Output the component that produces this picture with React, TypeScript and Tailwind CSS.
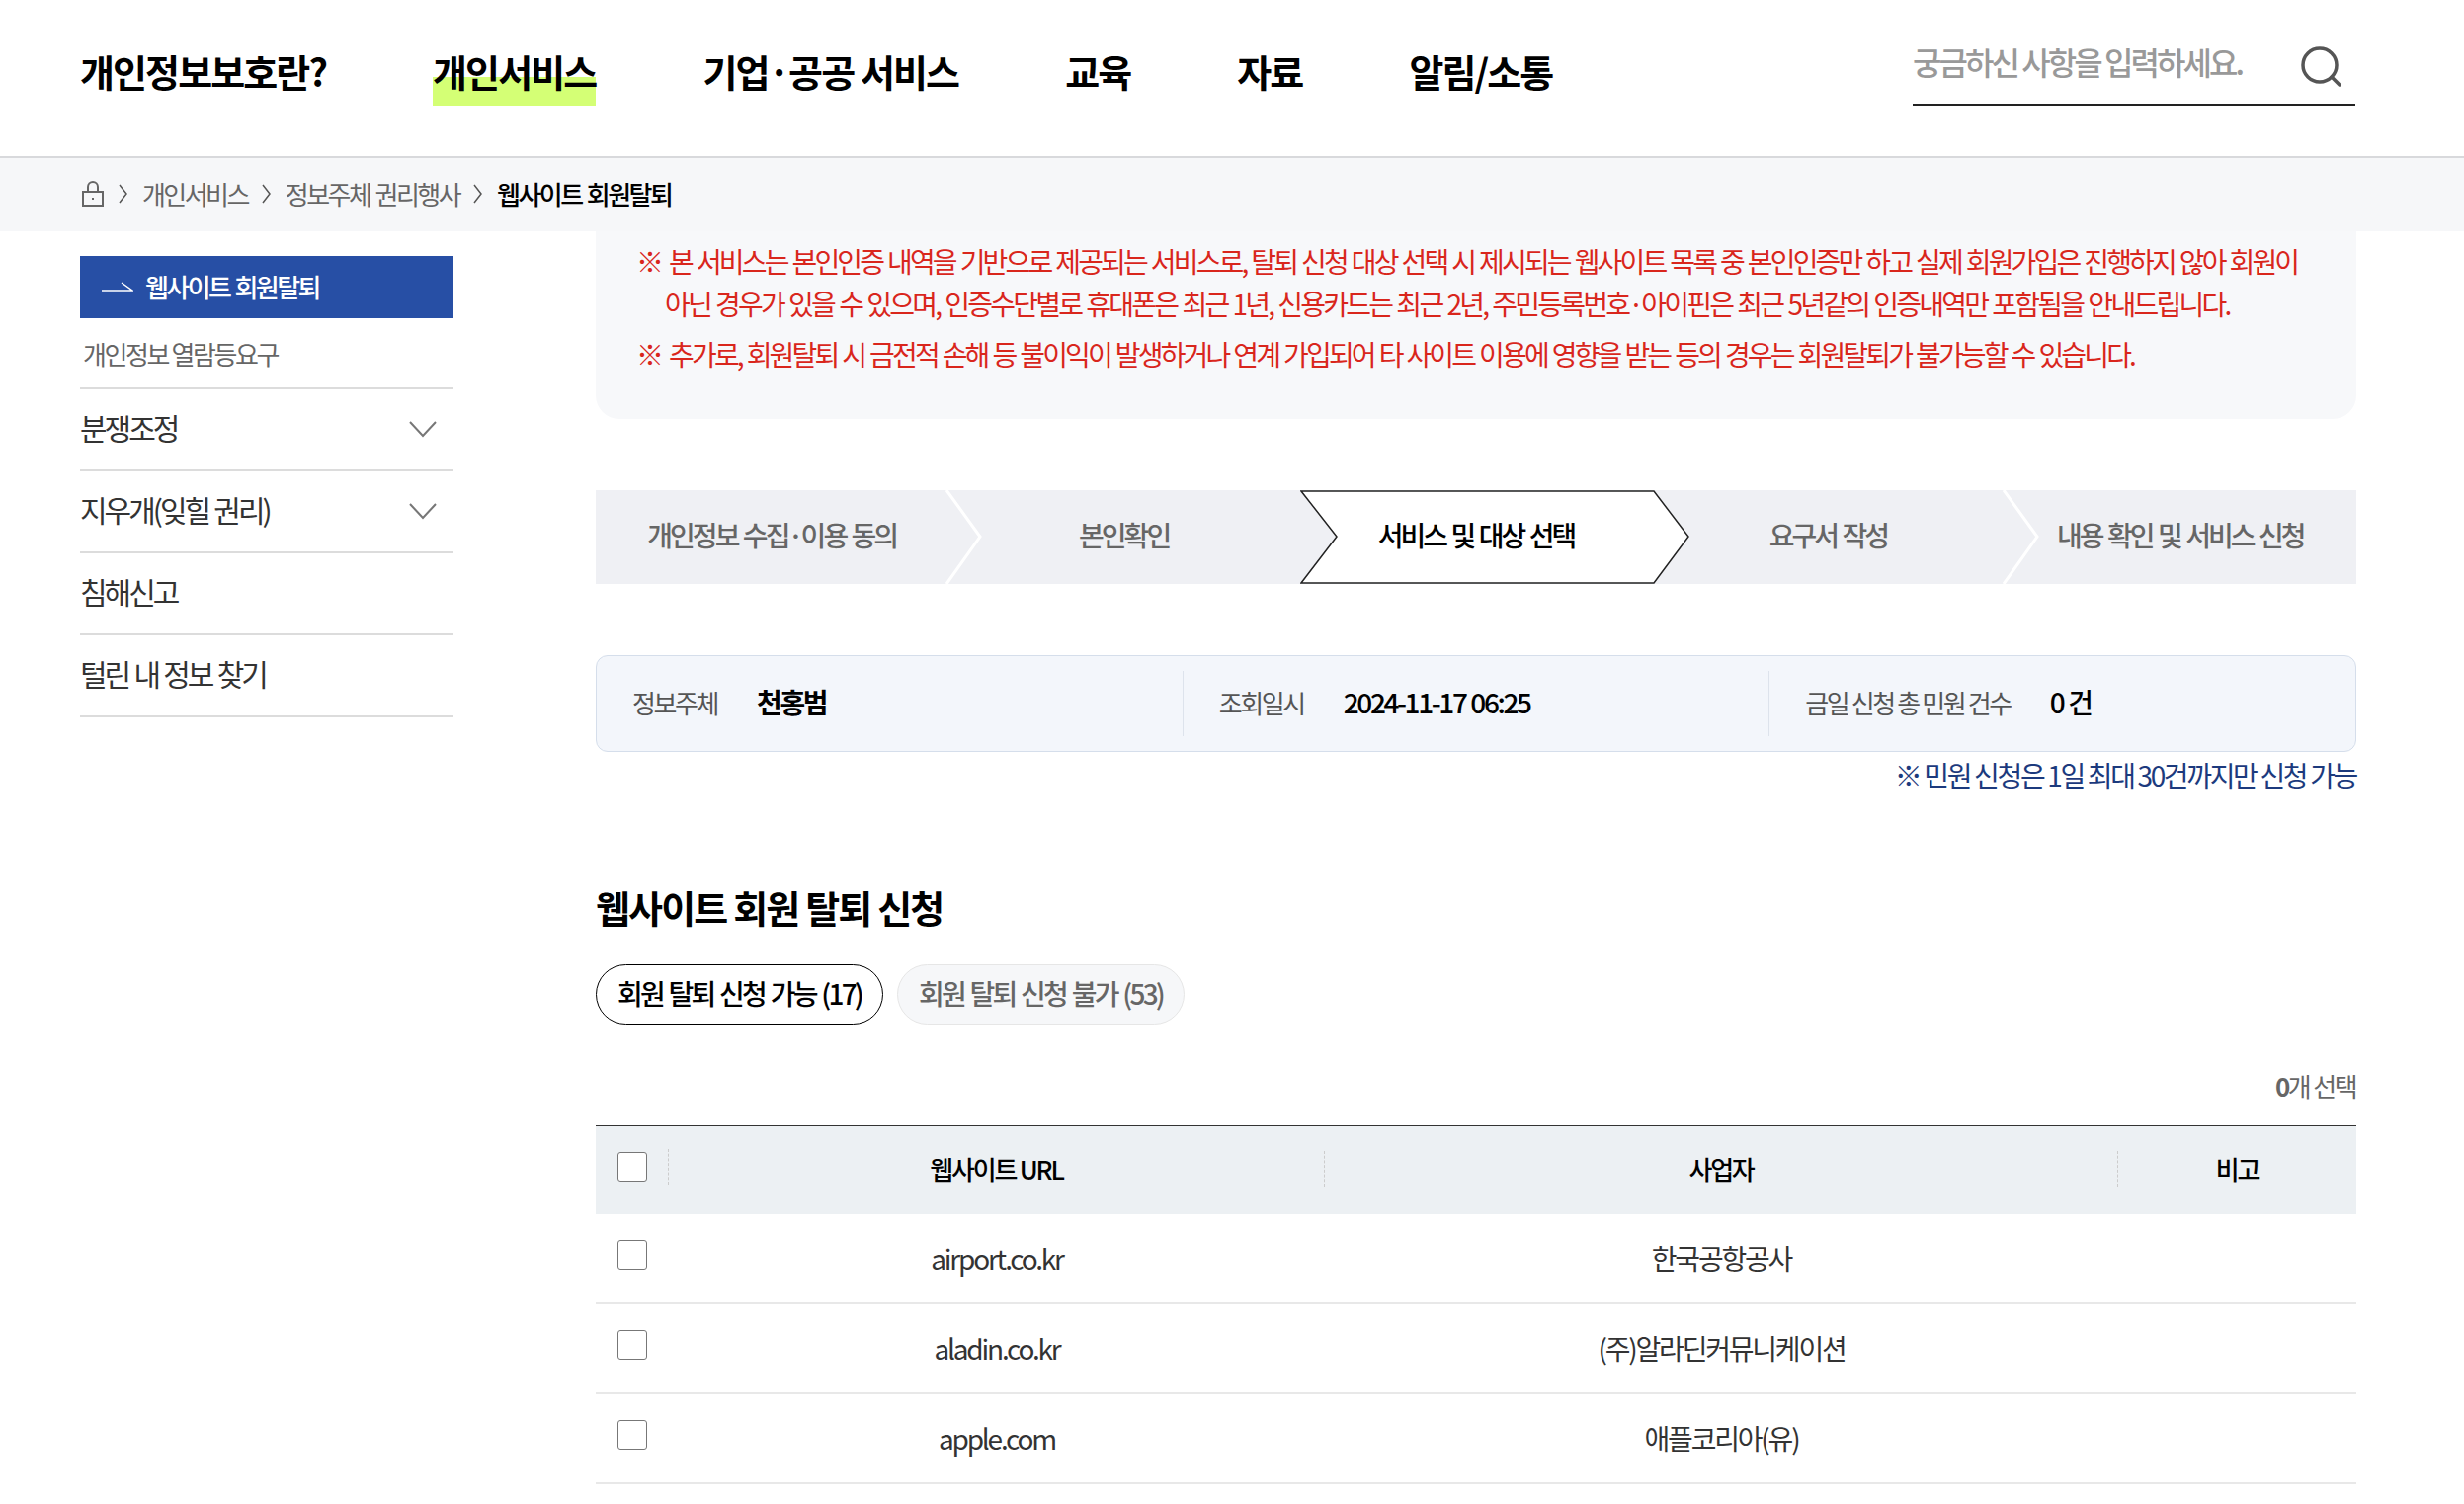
const FONT = "font-['Noto_Sans_CJK_KR','Noto_Sans',sans-serif]";

function Chevron() {
  return (
    <svg width="12" height="22" viewBox="0 0 12 22" fill="none" stroke="#555" strokeWidth="1.5">
      <path d="M2 2l7 9-7 9" />
    </svg>
  );
}

function Down() {
  return (
    <svg className="translate-y-[2px]" width="30" height="18" viewBox="0 0 30 18" fill="none" stroke="#777" strokeWidth="2">
      <path d="M2 2l13 14L28 2" />
    </svg>
  );
}

function Check() {
  return <div className="w-[30px] h-[30px] bg-white border border-[#777] rounded-[3px]" />;
}

const STEPS = ["개인정보 수집·이용 동의", "본인확인", "서비스 및 대상 선택", "요구서 작성", "내용 확인 및 서비스 신청"];

function Steps() {
  return (
    <div className="mt-[72px] flex h-[95px] bg-[#eff0f4]">
      {STEPS.map((s, i) => (
        <div key={s} className={`relative flex-1 flex items-center justify-center pb-[5px] text-[28px] tracking-[-2.95px] [word-spacing:2px] font-medium ${i === 2 ? "text-black" : "text-[#666]"}`}>
          {i === 2 ? (
            <svg className="absolute left-0 top-0 z-10" width="394" height="95" viewBox="0 0 394 95" fill="#fff" stroke="#222" strokeWidth="1.5">
              <path d="M1 1H358L393 47L358 94H1L37 47Z" />
            </svg>
          ) : i !== 4 && i !== 1 ? (
            <svg className="absolute right-[-36px] top-0 z-0" width="38" height="95" viewBox="0 0 38 95" fill="none" stroke="#fff" strokeWidth="3">
              <path d="M1 0L35 47L1 95" />
            </svg>
          ) : null}
          <span className="relative z-20">{s}</span>
        </div>
      ))}
    </div>
  );
}

function Info({ label, value, border, bold }: { label: string; value: string; border?: boolean; bold?: boolean }) {
  return (
    <div className={`flex-1 flex items-center h-[66px] pl-[36px] gap-[40px] ${border ? "border-l border-[#dde3ec]" : ""}`}>
      <span className="text-[26px] tracking-[-2.4px] text-[#555] -translate-y-[2px]">{label}</span>
      <span className={`text-[28px] tracking-[-2.4px] [word-spacing:1px] text-black -translate-y-[2px] ${bold ? "font-bold" : "font-medium"}`}>{value}</span>
    </div>
  );
}

const ROWS = [
  ["airport.co.kr", "한국공항공사"],
  ["aladin.co.kr", "(주)알라딘커뮤니케이션"],
  ["apple.com", "애플코리아(유)"],
];

export default function App() {
  return (
    <div className={`${FONT} h-[1522px] overflow-hidden bg-white text-[#333]`}>
      <header className="h-[160px] border-b-2 border-[#d8d9dc] flex items-start pl-[81px] pr-[110px] justify-between">
        <nav className="flex gap-[108px] pt-[45px] text-[38px] tracking-[-1.9px] font-bold text-black leading-[54px]">
          <span>개인정보보호란?</span>
          <span className="relative">
            <span className="absolute left-0 right-0 top-[33px] h-[29px] bg-[#d4ff75]" />
            <span className="relative">개인서비스</span>
          </span>
          <span>기업·공공 서비스</span>
          <span>교육</span>
          <span>자료</span>
          <span>알림/소통</span>
        </nav>
        <div className="w-[448px] h-[107px] border-b-2 border-[#222] flex items-center justify-between pt-[18px]">
          <span className="text-[32px] tracking-[-2.95px] text-[#999] font-medium">궁금하신 사항을 입력하세요.</span>
          <svg className="mr-[12px] translate-y-[7px]" width="44" height="46" viewBox="0 0 44 46" fill="none" stroke="#555" strokeWidth="3.5" strokeLinecap="round">
            <circle cx="20" cy="20" r="17" />
            <path d="M32 32l8 8" />
          </svg>
        </div>
      </header>

      <div className="h-[74px] bg-[#f6f7f9] pl-[81px] pb-[3px] flex items-center gap-[13px] text-[26px] tracking-[-2.55px] [word-spacing:2px] text-[#666]">
        <svg className="mr-[1px]" width="24" height="28" viewBox="0 0 24 28" fill="none" stroke="#666" strokeWidth="2">
          <rect x="3" y="12" width="20" height="14" />
          <path d="M8 12V7a5 5 0 0110 0v5" />
          <path d="M13 18v2" />
        </svg>
        <Chevron />
        <span>개인서비스</span>
        <Chevron />
        <span>정보주체 권리행사</span>
        <Chevron />
        <span className="text-black font-medium">웹사이트 회원탈퇴</span>
      </div>

      <div className="flex pl-[81px] pr-[109px] gap-[144px]">
        <aside className="w-[378px] shrink-0 pt-[25px]">
          <div className="h-[63px] bg-[#274fa5] text-white flex items-center pl-[22px] pb-[2px] gap-[12px] text-[26px] tracking-[-2.6px] [word-spacing:2px] font-medium">
            <svg width="32" height="12" viewBox="0 0 32 12" fill="none" stroke="#fff" strokeWidth="1.5">
              <path d="M0 10h31L20 2" />
            </svg>
            웹사이트 회원탈퇴
          </div>
          <div className="h-[72px] flex items-center pl-[3px] text-[26px] tracking-[-2.4px] text-[#666] border-b-2 border-[#dcdcdc]">개인정보 열람등요구</div>
          {[
            ["분쟁조정", true],
            ["지우개(잊힐 권리)", true],
            ["침해신고", false],
            ["털린 내 정보 찾기", false],
          ].map(([t, d]) => (
            <div key={t as string} className="h-[83px] flex items-center justify-between pr-[16px] pb-[5px] text-[30px] tracking-[-3px] [word-spacing:1.5px] text-[#333] border-b-2 border-[#dcdcdc]">
              <span>{t}</span>
              {d ? <Down /> : null}
            </div>
          ))}
        </aside>

        <main className="flex-1 min-w-0">
          <div className="h-[190px] bg-[#f7f8fa] rounded-b-[24px] pl-[41px] pr-[20px] text-[28px] tracking-[-2.85px] [word-spacing:1.5px] text-[#d9261c] pt-[9px]">
            <p className="leading-[43px] whitespace-nowrap"><span className="mr-[3px]">※</span> 본 서비스는 본인인증 내역을 기반으로 제공되는 서비스로, 탈퇴 신청 대상 선택 시 제시되는 웹사이트 목록 중 본인인증만 하고 실제 회원가입은 진행하지 않아 회원이</p>
            <p className="leading-[43px] pl-[29px] tracking-[-2.75px] whitespace-nowrap">아닌 경우가 있을 수 있으며, 인증수단별로 휴대폰은 최근 1년, 신용카드는 최근 2년, 주민등록번호·아이핀은 최근 5년같의 인증내역만 포함됨을 안내드립니다.</p>
            <p className="leading-[43px] mt-[8px] whitespace-nowrap"><span className="mr-[3px]">※</span> 추가로, 회원탈퇴 시 금전적 손해 등 불이익이 발생하거나 연계 가입되어 타 사이트 이용에 영향을 받는 등의 경우는 회원탈퇴가 불가능할 수 있습니다.</p>
          </div>

          <Steps />

          <div className="mt-[72px] h-[98px] bg-[#f3f6fb] border border-[#d5deeb] rounded-[12px] flex items-center">
            <Info label="정보주체" value="천홍범" bold />
            <Info label="조회일시" value="2024-11-17 06:25" border />
            <Info label="금일 신청 총 민원 건수" value="0 건" border />
          </div>
          <p className="text-right mt-[2px] text-[28px] tracking-[-2.35px] text-[#1c3a7d] leading-[42px]">※ 민원 신청은 1일 최대 30건까지만 신청 가능</p>

          <h2 className="mt-[86px] text-[38px] tracking-[-1.85px] font-bold text-black leading-[54px]">웹사이트 회원 탈퇴 신청</h2>

          <div className="mt-[31px] flex gap-[14px]">
            <div className="w-[291px] h-[61px] pb-[3px] rounded-full border-[1.5px] border-black flex items-center justify-center text-[28px] tracking-[-2.75px] [word-spacing:2px] font-medium text-black">회원 탈퇴 신청 가능 (17)</div>
            <div className="w-[291px] h-[61px] pb-[3px] rounded-full border-[1.5px] border-[#e6e6e6] bg-[#f6f7f9] flex items-center justify-center text-[28px] tracking-[-2.75px] [word-spacing:2px] font-medium text-[#666]">회원 탈퇴 신청 불가 (53)</div>
          </div>

          <p className="text-right mt-[42px] pr-[1px] text-[26px] tracking-[-2.6px] [word-spacing:1px] text-[#666] leading-[40px]"><b>0</b>개 선택</p>

          <div className="mt-[19px] border-t-[1.5px] border-[#333]">
            <div className="h-[90px] pb-[2px] bg-[#ecf0f3] flex items-center text-[26px] tracking-[-2.2px] font-medium text-black">
              <div className="w-[74px] h-[36px] pl-[22px] border-r border-dashed border-[#ccc] flex items-center -translate-y-[2px]"><Check /></div>
              <div className="w-[664px] h-[36px] text-center border-r border-dashed border-[#ccc] leading-[36px]">웹사이트 URL</div>
              <div className="w-[803px] h-[36px] text-center border-r border-dashed border-[#ccc] leading-[36px]">사업자</div>
              <div className="flex-1 text-center leading-[36px]">비고</div>
            </div>
            {ROWS.map(([u, c]) => (
              <div key={u} className="h-[91px] flex items-center border-b-2 border-[#e8e8e8] text-[28px] tracking-[-2.2px] text-[#333]">
                <div className="w-[74px] pl-[22px] -translate-y-[4px]"><Check /></div>
                <div className="w-[664px] text-center -translate-y-[1px]">{u}</div>
                <div className="w-[803px] text-center -translate-y-[1px]">{c}</div>
                <div className="flex-1" />
              </div>
            ))}
          </div>
        </main>
      </div>
    </div>
  );
}
